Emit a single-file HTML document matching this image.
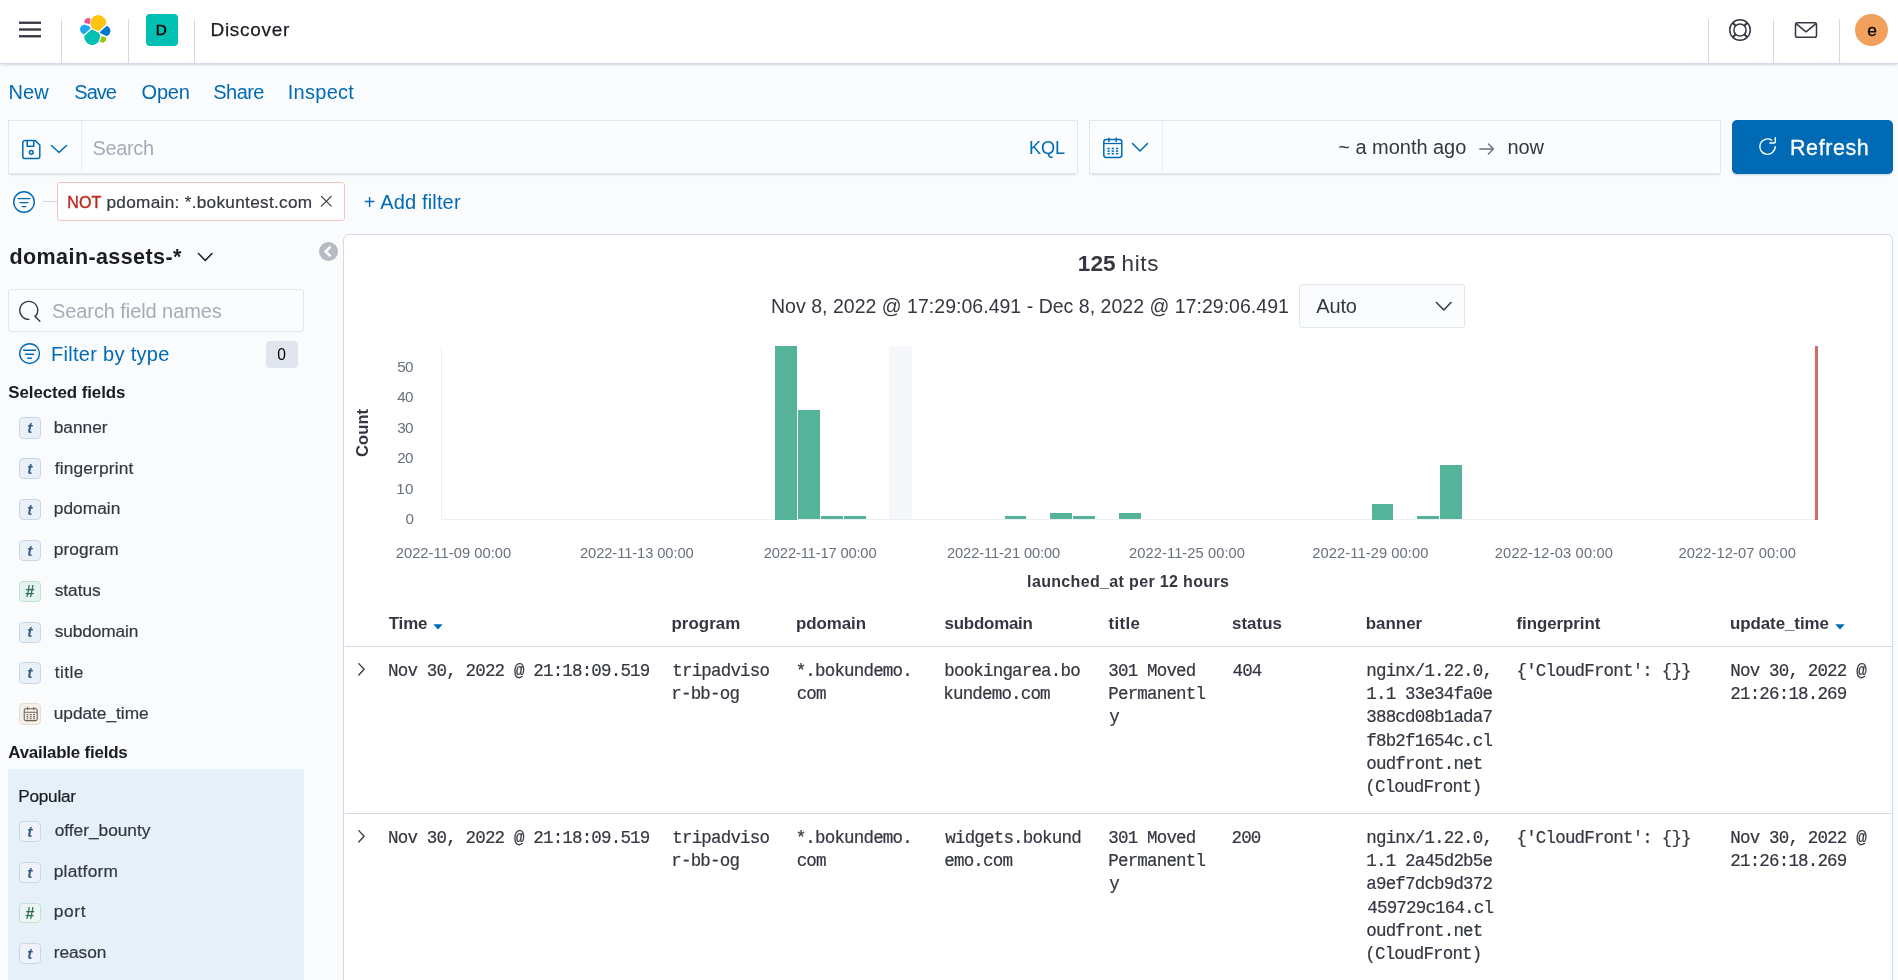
<!DOCTYPE html>
<html><head><meta charset="utf-8"><title>Discover - Elastic</title>
<style>
html,body{margin:0;padding:0;}
body{width:1898px;height:980px;overflow:hidden;background:#fafbfd;position:relative;font-family:"Liberation Sans",sans-serif;}
#app{position:absolute;left:0;top:0;width:1898px;height:980px;overflow:hidden;will-change:transform;}
.b{position:absolute;display:block;}
.t{position:absolute;white-space:pre;margin:0;padding:0;}
.sans{font-family:"Liberation Sans",sans-serif;}
.mono{font-family:"Liberation Mono",monospace;}
.serif{font-family:"Liberation Serif",serif;}
</style></head><body>
<div id="app">
<div class="b" style="left:0px;top:0px;width:1898px;height:63px;background:#fff;border-bottom:1px solid #d3dae6;box-shadow:0 2px 2px -1px rgba(152,162,179,.3),0 1px 5px -2px rgba(152,162,179,.3);"></div>
<div class="b" style="left:60.85px;top:19px;width:1.3px;height:44px;background:#d3dae6;"></div>
<div class="b" style="left:127.85px;top:19px;width:1.3px;height:44px;background:#d3dae6;"></div>
<div class="b" style="left:193.85px;top:19px;width:1.3px;height:44px;background:#d3dae6;"></div>
<div class="b" style="left:1707.85px;top:19px;width:1.3px;height:44px;background:#d3dae6;"></div>
<div class="b" style="left:1772.85px;top:19px;width:1.3px;height:44px;background:#d3dae6;"></div>
<div class="b" style="left:1838.85px;top:19px;width:1.3px;height:44px;background:#d3dae6;"></div>
<svg class="b" style="left:18px;top:20px;" width="24" height="20" viewBox="0 0 24 20"><rect x="1" y="1.6" width="22" height="2.3" fill="#343741"/><rect x="1" y="8.35" width="22" height="2.3" fill="#343741"/><rect x="1" y="15.1" width="22" height="2.3" fill="#343741"/></svg>
<svg class="b" style="left:78px;top:12px;" width="36" height="36" viewBox="0 0 36 36"><polygon points="20.28,3.76 24.14,5.12 26.94,8.05 27.67,11.27 22.33,16.72 20.52,18.21 14.52,15.64 13.20,12.17 13.92,7.62 16.42,4.66" fill="#fec514" stroke="#fec514" stroke-width="1.6" stroke-linejoin="round"/><polygon points="9.51,6.82 11.54,7.06 11.11,11.26 9.32,10.81 7.04,10.03 7.31,8.34" fill="#f04e98" stroke="#f04e98" stroke-width="1.6" stroke-linejoin="round"/><polygon points="6.49,13.46 10.64,14.76 11.59,16.28 5.63,21.53 3.52,19.69 2.76,16.92 3.83,14.47" fill="#1ba9f5" stroke="#1ba9f5" stroke-width="1.6" stroke-linejoin="round"/><polygon points="28.87,14.73 30.98,16.55 31.75,19.11 30.68,21.78 28.64,23.31 22.90,20.63 22.91,20.19" fill="#0077cc" stroke="#0077cc" stroke-width="1.6" stroke-linejoin="round"/><polygon points="13.76,18.30 19.99,21.13 21.60,23.67 19.85,29.36 17.13,31.56 14.01,32.49 9.95,30.72 7.35,27.12 7.07,24.36" fill="#00bfb3" stroke="#00bfb3" stroke-width="1.6" stroke-linejoin="round"/><polygon points="24.01,25.10 27.79,26.34 26.95,28.43 25.23,29.94 22.83,29.12" fill="#93c90e" stroke="#93c90e" stroke-width="1.6" stroke-linejoin="round"/></svg>
<div class="b" style="left:146px;top:14px;width:32px;height:32px;background:#00bfb3;border-radius:4px;"></div>
<div class="t sans" style="left:155.70px;top:20.10px;font-size:15.3px;line-height:20px;font-weight:400;color:#000;letter-spacing:0.000px;-webkit-text-stroke:0.5px #000;">D</div>
<div class="t sans" style="left:210.50px;top:17.40px;font-size:19px;line-height:25px;font-weight:400;color:#1a1c21;letter-spacing:0.703px;-webkit-text-stroke:0.25px #1a1c21;">Discover</div>
<svg class="b" style="left:1728px;top:18px;" width="24" height="24" viewBox="0 0 24 24"><g fill="none" stroke="#343741" stroke-width="1.5"><circle cx="12" cy="12" r="10.3"/><circle cx="12" cy="12" r="6.1"/><path d="M4.7 4.7l3 3M19.3 4.7l-3 3M4.7 19.3l3-3M19.3 19.3l-3-3" stroke-width="2"/></g></svg>
<svg class="b" style="left:1793px;top:20px;" width="26" height="20" viewBox="0 0 26 20"><g fill="none" stroke="#343741" stroke-width="1.5" stroke-linejoin="round"><rect x="2.5" y="2.7" width="21" height="14.6" rx="1.8"/><path d="M3 3.6l10 8.2 10-8.2"/></g></svg>
<div class="b" style="left:1855px;top:14px;width:32.6px;height:32px;background:#f1a15c;border-radius:50%;"></div>
<div class="t sans" style="left:1867.20px;top:18.60px;font-size:17.4px;line-height:23px;font-weight:400;color:#000;letter-spacing:0.000px;-webkit-text-stroke:0.3px #000;">e</div>
<div class="t sans" style="left:8.50px;top:79.30px;font-size:20px;line-height:26px;font-weight:400;color:#006bb4;letter-spacing:0.117px;">New</div>
<div class="t sans" style="left:74.30px;top:79.30px;font-size:20px;line-height:26px;font-weight:400;color:#006bb4;letter-spacing:-0.988px;">Save</div>
<div class="t sans" style="left:141.50px;top:79.30px;font-size:20px;line-height:26px;font-weight:400;color:#006bb4;letter-spacing:-0.168px;">Open</div>
<div class="t sans" style="left:213.30px;top:79.30px;font-size:20px;line-height:26px;font-weight:400;color:#006bb4;letter-spacing:-0.562px;">Share</div>
<div class="t sans" style="left:287.80px;top:79.30px;font-size:20px;line-height:26px;font-weight:400;color:#006bb4;letter-spacing:0.262px;">Inspect</div>
<div class="b" style="left:8px;top:120px;width:1070px;height:53.5px;background:#fbfcfd;border:1px solid #e2e6ef;box-shadow:0 1px 1px -1px rgba(152,162,179,.3),0 3px 2px -2px rgba(152,162,179,.3);box-sizing:border-box;"></div>
<div class="b" style="left:81px;top:121px;width:1px;height:51px;background:#e9ecf3;"></div>
<svg class="b" style="left:21px;top:138.5px;" width="22" height="21" viewBox="0 0 22 21"><g fill="none" stroke="#006bb4" stroke-width="1.5" stroke-linejoin="round"><path d="M1.8 3.6a2 2 0 012-2h10.4l4.6 4.4v11.4a2 2 0 01-2 2H3.8a2 2 0 01-2-2z"/><path d="M6.2 1.8v5.4h6.6V1.8"/><circle cx="10.3" cy="13.3" r="1.9"/></g></svg>
<svg class="b" style="left:50px;top:144px;" width="18" height="10" viewBox="0 0 18 10"><path d="M1.5 1.5L9 8.5L16.5 1.5" fill="none" stroke="#006bb4" stroke-width="1.5" stroke-linecap="round" stroke-linejoin="round"/></svg>
<div class="t sans" style="left:92.50px;top:135.00px;font-size:20px;line-height:26px;font-weight:400;color:#a5acb8;letter-spacing:-0.349px;">Search</div>
<div class="t sans" style="left:1029.00px;top:135.80px;font-size:18.2px;line-height:24px;font-weight:400;color:#006bb4;letter-spacing:-0.139px;">KQL</div>
<div class="b" style="left:1089px;top:120px;width:632px;height:53.5px;background:#fbfcfd;border:1px solid #e2e6ef;box-shadow:0 1px 1px -1px rgba(152,162,179,.3),0 3px 2px -2px rgba(152,162,179,.3);box-sizing:border-box;"></div>
<div class="b" style="left:1162px;top:121px;width:1px;height:51px;background:#e9ecf3;"></div>
<svg class="b" style="left:1102px;top:137px;" width="22" height="23" viewBox="0 0 22 23"><g fill="none" stroke="#006bb4" stroke-width="1.5"><rect x="1.8" y="2.5" width="18" height="18" rx="2.4"/><path d="M1.8 6.5h18" stroke-width="1.3"/><path d="M6.9 1.3v3.2M14.2 1.3v3.2" stroke-linecap="round"/></g><g fill="#006bb4"><rect x="5.45" y="10.75" width="2.3" height="1.5"/><rect x="9.65" y="10.75" width="2.3" height="1.5"/><rect x="13.85" y="10.75" width="2.3" height="1.5"/><rect x="5.45" y="13.35" width="2.3" height="1.5"/><rect x="9.65" y="13.35" width="2.3" height="1.5"/><rect x="13.85" y="13.35" width="2.3" height="1.5"/><rect x="5.45" y="15.95" width="2.3" height="1.5"/><rect x="9.65" y="15.95" width="2.3" height="1.5"/><rect x="13.85" y="15.95" width="2.3" height="1.5"/></g></svg>
<svg class="b" style="left:1131px;top:142px;" width="18" height="10.5" viewBox="0 0 18 10.5"><path d="M1.5 1.5L9 9L16.5 1.5" fill="none" stroke="#006bb4" stroke-width="1.5" stroke-linecap="round" stroke-linejoin="round"/></svg>
<div class="t sans" style="left:1338.30px;top:133.80px;font-size:20px;line-height:26px;font-weight:400;color:#343741;letter-spacing:-0.034px;">~ a month ago</div>
<svg class="b" style="left:1478px;top:142px;" width="18" height="14" viewBox="0 0 18 14"><path d="M1.8 7h13.6M10.4 2l5 5-5 5" fill="none" stroke="#69707d" stroke-width="1.4" stroke-linecap="round" stroke-linejoin="round"/></svg>
<div class="t sans" style="left:1507.50px;top:133.80px;font-size:20px;line-height:26px;font-weight:400;color:#343741;letter-spacing:-0.123px;">now</div>
<div class="b" style="left:1732px;top:120px;width:161px;height:53.5px;background:#006bb4;border-radius:5px;box-shadow:0 2px 2px -1px rgba(54,97,126,.3);"></div>
<svg class="b" style="left:1758px;top:136px;" width="19" height="20" viewBox="0 0 19 20"><g fill="none" stroke="#fff" stroke-width="1.4" stroke-linecap="round" stroke-linejoin="round"><path d="M17.2 10.6a7.7 7.7 0 11-3.6-6.5"/><path d="M17.3 1.6v4.4a1 1 0 01-1 1h-4.4"/></g></svg>
<div class="t sans" style="left:1790.00px;top:134.00px;font-size:21.5px;line-height:28px;font-weight:400;color:#fff;letter-spacing:0.579px;-webkit-text-stroke:0.3px #fff;">Refresh</div>
<svg class="b" style="left:12px;top:190px;" width="24" height="24" viewBox="0 0 24 24"><g fill="none" stroke="#006bb4" stroke-width="1.4" stroke-linecap="round"><circle cx="12" cy="12" r="10.3"/><path d="M6 8.6h12 M8 12.6h8 M10.2 16.6h3.6"/></g></svg>
<div class="b" style="left:43px;top:201px;width:14px;height:1px;background:#d3dae6;"></div>
<div class="b" style="left:57px;top:182px;width:288px;height:39px;background:#fff;border:1px solid #f0c4c0;border-radius:3px;box-sizing:border-box;"></div>
<div class="t sans" style="left:67.30px;top:192.10px;font-size:16px;line-height:21px;font-weight:400;color:#bd271e;letter-spacing:0.150px;-webkit-text-stroke:0.4px #bd271e;">NOT</div>
<div class="t sans" style="left:106.50px;top:191.10px;font-size:17.2px;line-height:22px;font-weight:400;color:#343741;letter-spacing:0.300px;-webkit-text-stroke:0.2px #343741;">pdomain: *.bokuntest.com</div>
<svg class="b" style="left:320px;top:194.8px;" width="13" height="13" viewBox="0 0 13 13"><path d="M1.4 1.4l9.8 9.8M11.2 1.4l-9.8 9.8" stroke="#343741" stroke-width="1.15" stroke-linecap="round"/></svg>
<div class="t sans" style="left:363.80px;top:188.60px;font-size:20px;line-height:26px;font-weight:400;color:#006bb4;letter-spacing:0.154px;">+ Add filter</div>
<div class="t sans" style="left:9.50px;top:242.80px;font-size:21.5px;line-height:28px;font-weight:700;color:#1a1c21;letter-spacing:0.413px;">domain-assets-*</div>
<svg class="b" style="left:197px;top:251.5px;" width="16.5" height="10" viewBox="0 0 16.5 10"><path d="M1.5 1.5L8.25 8.5L15 1.5" fill="none" stroke="#1a1c21" stroke-width="1.5" stroke-linecap="round" stroke-linejoin="round"/></svg>
<svg class="b" style="left:319px;top:242px;" width="19" height="19" viewBox="0 0 19 19"><circle cx="9.5" cy="9.5" r="9.4" fill="#b7bac0"/><path d="M11.6 4.6L6.6 9.5l5 4.9" fill="none" stroke="#fafbfd" stroke-width="2.6"/></svg>
<div class="b" style="left:8px;top:289px;width:296px;height:43px;background:#fbfcfd;border:1px solid #e1e5ee;box-sizing:border-box;border-radius:3px;"></div>
<svg class="b" style="left:18px;top:299.5px;" width="24" height="24" viewBox="0 0 24 24"><g fill="none" stroke="#343741" stroke-width="1.4" stroke-linecap="round"><path d="M10.9 19.4a9 9 0 116.4-2.8"/><path d="M16.9 16.2l5 5.1"/></g></svg>
<div class="t sans" style="left:52.00px;top:298.00px;font-size:20px;line-height:26px;font-weight:400;color:#a5acb8;letter-spacing:-0.082px;">Search field names</div>
<svg class="b" style="left:18.3px;top:342.3px;" width="23.2" height="23.2" viewBox="0 0 23.2 23.2"><g fill="none" stroke="#006bb4" stroke-width="1.4" stroke-linecap="round"><circle cx="11.6" cy="11.6" r="9.9"/><path d="M5.6 8.2h12 M7.6 12.2h8 M9.8 16.2h3.6"/></g></svg>
<div class="t sans" style="left:51.00px;top:340.80px;font-size:20px;line-height:26px;font-weight:400;color:#006bb4;letter-spacing:0.303px;">Filter by type</div>
<div class="b" style="left:265.5px;top:341px;width:32.5px;height:26.5px;background:#e0e5ee;border-radius:4px;"></div>
<div class="t sans" style="left:277.20px;top:344.50px;font-size:15.6px;line-height:20px;font-weight:500;color:#000;letter-spacing:0.000px;">0</div>
<div class="t sans" style="left:8.30px;top:381.70px;font-size:16.9px;line-height:22px;font-weight:700;color:#1a1c21;letter-spacing:-0.085px;">Selected fields</div>
<div class="b" style="left:19.25px;top:417.25px;width:21.5px;height:21.3px;background:#e9f0f7;border:1px solid #c9d8e7;border-radius:4px;box-sizing:border-box;"></div><div class="t sans" style="left:27.20px;top:418.05px;font-size:15.5px;line-height:20px;font-weight:700;font-style:italic;color:#3a5d80;letter-spacing:0.000px;">t</div>
<div class="t sans" style="left:53.75px;top:415.65px;font-size:17.3px;line-height:22px;font-weight:400;color:#343741;letter-spacing:-0.011px;-webkit-text-stroke:0.2px #343741;">banner</div>
<div class="b" style="left:19.25px;top:458.11px;width:21.5px;height:21.3px;background:#e9f0f7;border:1px solid #c9d8e7;border-radius:4px;box-sizing:border-box;"></div><div class="t sans" style="left:27.20px;top:458.91px;font-size:15.5px;line-height:20px;font-weight:700;font-style:italic;color:#3a5d80;letter-spacing:0.000px;">t</div>
<div class="t sans" style="left:54.75px;top:456.51px;font-size:17.3px;line-height:22px;font-weight:400;color:#343741;letter-spacing:0.171px;-webkit-text-stroke:0.2px #343741;">fingerprint</div>
<div class="b" style="left:19.25px;top:498.97px;width:21.5px;height:21.3px;background:#e9f0f7;border:1px solid #c9d8e7;border-radius:4px;box-sizing:border-box;"></div><div class="t sans" style="left:27.20px;top:499.77px;font-size:15.5px;line-height:20px;font-weight:700;font-style:italic;color:#3a5d80;letter-spacing:0.000px;">t</div>
<div class="t sans" style="left:53.75px;top:497.37px;font-size:17.3px;line-height:22px;font-weight:400;color:#343741;letter-spacing:0.054px;-webkit-text-stroke:0.2px #343741;">pdomain</div>
<div class="b" style="left:19.25px;top:539.83px;width:21.5px;height:21.3px;background:#e9f0f7;border:1px solid #c9d8e7;border-radius:4px;box-sizing:border-box;"></div><div class="t sans" style="left:27.20px;top:540.63px;font-size:15.5px;line-height:20px;font-weight:700;font-style:italic;color:#3a5d80;letter-spacing:0.000px;">t</div>
<div class="t sans" style="left:53.75px;top:538.23px;font-size:17.3px;line-height:22px;font-weight:400;color:#343741;letter-spacing:0.091px;-webkit-text-stroke:0.2px #343741;">program</div>
<div class="b" style="left:19.25px;top:580.69px;width:21.5px;height:21.3px;background:#e4f3ed;border:1px solid #bfe2d3;border-radius:4px;box-sizing:border-box;"></div><div class="t sans" style="left:25.20px;top:581.09px;font-size:16px;line-height:21px;font-weight:700;font-style:italic;color:#2d6e58;letter-spacing:0.000px;">#</div>
<div class="t sans" style="left:54.75px;top:579.09px;font-size:17.3px;line-height:22px;font-weight:400;color:#343741;letter-spacing:-0.043px;-webkit-text-stroke:0.2px #343741;">status</div>
<div class="b" style="left:19.25px;top:621.55px;width:21.5px;height:21.3px;background:#e9f0f7;border:1px solid #c9d8e7;border-radius:4px;box-sizing:border-box;"></div><div class="t sans" style="left:27.20px;top:622.35px;font-size:15.5px;line-height:20px;font-weight:700;font-style:italic;color:#3a5d80;letter-spacing:0.000px;">t</div>
<div class="t sans" style="left:54.75px;top:619.95px;font-size:17.3px;line-height:22px;font-weight:400;color:#343741;letter-spacing:-0.116px;-webkit-text-stroke:0.2px #343741;">subdomain</div>
<div class="b" style="left:19.25px;top:662.41px;width:21.5px;height:21.3px;background:#e9f0f7;border:1px solid #c9d8e7;border-radius:4px;box-sizing:border-box;"></div><div class="t sans" style="left:27.20px;top:663.21px;font-size:15.5px;line-height:20px;font-weight:700;font-style:italic;color:#3a5d80;letter-spacing:0.000px;">t</div>
<div class="t sans" style="left:54.75px;top:660.81px;font-size:17.3px;line-height:22px;font-weight:400;color:#343741;letter-spacing:0.430px;-webkit-text-stroke:0.2px #343741;">title</div>
<div class="b" style="left:19.25px;top:703.27px;width:21.5px;height:21.3px;background:#f5f1ea;border:1px solid #e6dece;border-radius:4px;box-sizing:border-box;"></div><svg class="b" style="left:22.5px;top:705.87px;" width="15.5" height="16" viewBox="0 0 15.5 16"><g fill="none" stroke="#6a6050" stroke-width="1.05"><rect x="1.2" y="2.8" width="13" height="11.8" rx="1.6"/><path d="M1.2 6.2h13M4.6 1v3M10.8 1v3"/></g><g fill="#6a6050"><rect x="3.6" y="8" width="1.7" height="1.3"/><rect x="6.9" y="8" width="1.7" height="1.3"/><rect x="10.2" y="8" width="1.7" height="1.3"/><rect x="3.6" y="10.2" width="1.7" height="1.3"/><rect x="6.9" y="10.2" width="1.7" height="1.3"/><rect x="10.2" y="10.2" width="1.7" height="1.3"/><rect x="3.6" y="12.3" width="1.7" height="1.0"/><rect x="6.9" y="12.3" width="1.7" height="1.0"/><rect x="10.2" y="12.3" width="1.7" height="1.0"/></g></svg>
<div class="t sans" style="left:53.75px;top:701.67px;font-size:17.3px;line-height:22px;font-weight:400;color:#343741;letter-spacing:-0.025px;-webkit-text-stroke:0.2px #343741;">update_time</div>
<div class="t sans" style="left:8.30px;top:741.80px;font-size:16.9px;line-height:22px;font-weight:700;color:#1a1c21;letter-spacing:-0.197px;">Available fields</div>
<div class="b" style="left:8px;top:769px;width:296px;height:211px;background:#e6f0f8;"></div>
<div class="t sans" style="left:18.30px;top:785.20px;font-size:17.2px;line-height:22px;font-weight:400;color:#1a1c21;letter-spacing:-0.253px;-webkit-text-stroke:0.2px #1a1c21;">Popular</div>
<div class="b" style="left:19.25px;top:821.25px;width:21.5px;height:20.6px;background:#edf3f9;border:1px solid #c9d8e7;border-radius:4px;box-sizing:border-box;"></div><div class="t sans" style="left:27.20px;top:821.65px;font-size:15.5px;line-height:20px;font-weight:700;font-style:italic;color:#3a5d80;letter-spacing:0.000px;">t</div>
<div class="t sans" style="left:54.75px;top:818.65px;font-size:17.3px;line-height:22px;font-weight:400;color:#343741;letter-spacing:-0.011px;-webkit-text-stroke:0.2px #343741;">offer_bounty</div>
<div class="b" style="left:19.25px;top:862.3px;width:21.5px;height:20.6px;background:#edf3f9;border:1px solid #c9d8e7;border-radius:4px;box-sizing:border-box;"></div><div class="t sans" style="left:27.20px;top:862.70px;font-size:15.5px;line-height:20px;font-weight:700;font-style:italic;color:#3a5d80;letter-spacing:0.000px;">t</div>
<div class="t sans" style="left:53.75px;top:859.70px;font-size:17.3px;line-height:22px;font-weight:400;color:#343741;letter-spacing:0.246px;-webkit-text-stroke:0.2px #343741;">platform</div>
<div class="b" style="left:19.25px;top:902.6px;width:21.5px;height:20.6px;background:#edf6f3;border:1px solid #bfe2d3;border-radius:4px;box-sizing:border-box;"></div><div class="t sans" style="left:25.20px;top:902.60px;font-size:16px;line-height:21px;font-weight:700;font-style:italic;color:#2d6e58;letter-spacing:0.000px;">#</div>
<div class="t sans" style="left:53.75px;top:900.00px;font-size:17.3px;line-height:22px;font-weight:400;color:#343741;letter-spacing:0.674px;-webkit-text-stroke:0.2px #343741;">port</div>
<div class="b" style="left:19.25px;top:943.3px;width:21.5px;height:20.6px;background:#edf3f9;border:1px solid #c9d8e7;border-radius:4px;box-sizing:border-box;"></div><div class="t sans" style="left:27.20px;top:943.70px;font-size:15.5px;line-height:20px;font-weight:700;font-style:italic;color:#3a5d80;letter-spacing:0.000px;">t</div>
<div class="t sans" style="left:53.75px;top:940.70px;font-size:17.3px;line-height:22px;font-weight:400;color:#343741;letter-spacing:-0.046px;-webkit-text-stroke:0.2px #343741;">reason</div>
<div class="b" style="left:343px;top:234px;width:1550px;height:760px;background:#fff;border:1px solid #d3dae6;border-radius:6px;box-sizing:border-box;box-shadow:0 2px 2px -1px rgba(152,162,179,.2);"></div>
<div class="t sans" style="left:1077.80px;top:249.20px;font-size:22.6px;line-height:29px;font-weight:700;color:#343741;letter-spacing:0.034px;">125</div>
<div class="t sans" style="left:1121.50px;top:249.20px;font-size:22.4px;line-height:29px;font-weight:400;color:#343741;letter-spacing:0.717px;">hits</div>
<div class="t sans" style="left:771.00px;top:293.80px;font-size:19.5px;line-height:25px;font-weight:400;color:#343741;letter-spacing:0.023px;">Nov 8, 2022 @ 17:29:06.491 - Dec 8, 2022 @ 17:29:06.491</div>
<div class="b" style="left:1299px;top:284px;width:166px;height:43.5px;background:#fbfcfd;border:1px solid #e1e5ee;box-sizing:border-box;border-radius:3px;"></div>
<div class="t sans" style="left:1316.30px;top:293.30px;font-size:20px;line-height:26px;font-weight:400;color:#343741;letter-spacing:-0.173px;">Auto</div>
<svg class="b" style="left:1434.5px;top:300.5px;" width="17.5" height="10.5" viewBox="0 0 17.5 10.5"><path d="M1.5 1.5L8.75 9L16 1.5" fill="none" stroke="#343741" stroke-width="1.5" stroke-linecap="round" stroke-linejoin="round"/></svg>
<div class="b" style="left:441px;top:346px;width:1px;height:174px;background:#eef0f4;"></div>
<div class="b" style="left:441px;top:519px;width:1377px;height:1px;background:#eceef2;"></div>
<div class="b" style="left:889.3px;top:346px;width:22.7px;height:173px;background:#f5f7fa;"></div>
<div class="b" style="left:775.32px;top:346px;width:21.5px;height:173.5px;background:#54b399;"></div>
<div class="b" style="left:798.25px;top:409.7px;width:21.5px;height:109.8px;background:#54b399;"></div>
<div class="b" style="left:821.18px;top:516.45px;width:21.5px;height:3.05px;background:#54b399;"></div>
<div class="b" style="left:844.11px;top:516.45px;width:21.5px;height:3.05px;background:#54b399;"></div>
<div class="b" style="left:1004.62px;top:516.45px;width:21.5px;height:3.05px;background:#54b399;"></div>
<div class="b" style="left:1050.48px;top:513.4px;width:21.5px;height:6.1px;background:#54b399;"></div>
<div class="b" style="left:1073.41px;top:516.45px;width:21.5px;height:3.05px;background:#54b399;"></div>
<div class="b" style="left:1119.27px;top:513.4px;width:21.5px;height:6.1px;background:#54b399;"></div>
<div class="b" style="left:1371.5px;top:504.25px;width:21.5px;height:15.25px;background:#54b399;"></div>
<div class="b" style="left:1417.36px;top:516.45px;width:21.5px;height:3.05px;background:#54b399;"></div>
<div class="b" style="left:1440.29px;top:464.6px;width:21.5px;height:54.9px;background:#54b399;"></div>
<div class="b" style="left:1815.2px;top:346px;width:2.6px;height:173.5px;background:#d36b64;"></div>
<div class="t sans" style="left:405.60px;top:509.00px;font-size:15.2px;line-height:20px;font-weight:400;color:#69707d;letter-spacing:0.000px;">0</div>
<div class="t sans" style="left:396.30px;top:478.50px;font-size:15.2px;line-height:20px;font-weight:400;color:#69707d;letter-spacing:0.253px;">10</div>
<div class="t sans" style="left:397.30px;top:448.00px;font-size:15.2px;line-height:20px;font-weight:400;color:#69707d;letter-spacing:-0.747px;">20</div>
<div class="t sans" style="left:397.30px;top:417.50px;font-size:15.2px;line-height:20px;font-weight:400;color:#69707d;letter-spacing:-0.747px;">30</div>
<div class="t sans" style="left:397.30px;top:387.00px;font-size:15.2px;line-height:20px;font-weight:400;color:#69707d;letter-spacing:-0.747px;">40</div>
<div class="t sans" style="left:397.30px;top:356.50px;font-size:15.2px;line-height:20px;font-weight:400;color:#69707d;letter-spacing:-0.747px;">50</div>
<div class="b" style="left:356px;top:457px;width:0;height:0;transform:rotate(-90deg);transform-origin:0 0;"><div class="t sans" style="left:0.00px;top:-4.10px;font-size:16.6px;line-height:22px;font-weight:700;color:#343741;letter-spacing:0.052px;">Count</div></div>
<div class="t sans" style="left:395.75px;top:543.80px;font-size:14.7px;line-height:19px;font-weight:400;color:#69707d;letter-spacing:0.036px;">2022-11-09 00:00</div>
<div class="t sans" style="left:580.00px;top:543.80px;font-size:14.7px;line-height:19px;font-weight:400;color:#69707d;letter-spacing:-0.080px;">2022-11-13 00:00</div>
<div class="t sans" style="left:763.80px;top:543.80px;font-size:14.7px;line-height:19px;font-weight:400;color:#69707d;letter-spacing:-0.140px;">2022-11-17 00:00</div>
<div class="t sans" style="left:947.00px;top:543.80px;font-size:14.7px;line-height:19px;font-weight:400;color:#69707d;letter-spacing:-0.107px;">2022-11-21 00:00</div>
<div class="t sans" style="left:1129.10px;top:543.80px;font-size:14.7px;line-height:19px;font-weight:400;color:#69707d;letter-spacing:0.066px;">2022-11-25 00:00</div>
<div class="t sans" style="left:1312.30px;top:543.80px;font-size:14.7px;line-height:19px;font-weight:400;color:#69707d;letter-spacing:0.086px;">2022-11-29 00:00</div>
<div class="t sans" style="left:1494.75px;top:543.80px;font-size:14.7px;line-height:19px;font-weight:400;color:#69707d;letter-spacing:0.147px;">2022-12-03 00:00</div>
<div class="t sans" style="left:1678.50px;top:543.80px;font-size:14.7px;line-height:19px;font-weight:400;color:#69707d;letter-spacing:0.097px;">2022-12-07 00:00</div>
<div class="t sans" style="left:1027.10px;top:571.30px;font-size:16px;line-height:21px;font-weight:700;color:#343741;letter-spacing:0.346px;">launched_at per 12 hours</div>
<div class="b" style="left:344.5px;top:646px;width:1547px;height:1px;background:#d3dae6;"></div>
<div class="b" style="left:344.5px;top:813px;width:1547px;height:1px;background:#d3dae6;"></div>
<div class="t sans" style="left:388.75px;top:612.90px;font-size:16.9px;line-height:22px;font-weight:700;color:#343741;letter-spacing:-0.158px;">Time</div>
<div class="t sans" style="left:671.50px;top:612.90px;font-size:16.9px;line-height:22px;font-weight:700;color:#343741;letter-spacing:0.043px;">program</div>
<div class="t sans" style="left:796.00px;top:612.90px;font-size:16.9px;line-height:22px;font-weight:700;color:#343741;letter-spacing:-0.060px;">pdomain</div>
<div class="t sans" style="left:944.60px;top:612.90px;font-size:16.9px;line-height:22px;font-weight:700;color:#343741;letter-spacing:-0.221px;">subdomain</div>
<div class="t sans" style="left:1108.60px;top:612.90px;font-size:16.9px;line-height:22px;font-weight:700;color:#343741;letter-spacing:0.291px;">title</div>
<div class="t sans" style="left:1232.00px;top:612.90px;font-size:16.9px;line-height:22px;font-weight:700;color:#343741;letter-spacing:0.049px;">status</div>
<div class="t sans" style="left:1365.70px;top:612.90px;font-size:16.9px;line-height:22px;font-weight:700;color:#343741;letter-spacing:0.032px;">banner</div>
<div class="t sans" style="left:1516.50px;top:612.90px;font-size:16.9px;line-height:22px;font-weight:700;color:#343741;letter-spacing:-0.057px;">fingerprint</div>
<div class="t sans" style="left:1730.00px;top:612.90px;font-size:16.9px;line-height:22px;font-weight:700;color:#343741;letter-spacing:-0.059px;">update_time</div>
<svg class="b" style="left:433.2px;top:624px;" width="10" height="6" viewBox="0 0 10 6"><path d="M0.3 0.3h9.4L5 5.6z" fill="#006bb4"/></svg>
<svg class="b" style="left:1835px;top:624px;" width="10" height="6" viewBox="0 0 10 6"><path d="M0.3 0.3h9.4L5 5.6z" fill="#006bb4"/></svg>
<svg class="b" style="left:357px;top:662.2px;" width="10" height="15" viewBox="0 0 10 15"><path d="M1.8 1.6l5.3 5.7-5.3 5.7" fill="none" stroke="#343741" stroke-width="1.3" stroke-linecap="round" stroke-linejoin="round"/></svg>
<div class="t mono" style="left:388.10px;top:659.50px;font-size:17.5px;line-height:23px;font-weight:400;color:#343741;letter-spacing:-0.822px;-webkit-text-stroke:0.2px #343741;">Nov 30, 2022 @ 21:18:09.519</div>
<div class="t mono" style="left:672.30px;top:659.50px;font-size:17.5px;line-height:23px;font-weight:400;color:#343741;letter-spacing:-0.822px;-webkit-text-stroke:0.2px #343741;">tripadviso</div><div class="t mono" style="left:671.30px;top:682.85px;font-size:17.5px;line-height:23px;font-weight:400;color:#343741;letter-spacing:-0.822px;-webkit-text-stroke:0.2px #343741;">r-bb-og</div>
<div class="t mono" style="left:795.70px;top:659.50px;font-size:17.5px;line-height:23px;font-weight:400;color:#343741;letter-spacing:-0.822px;-webkit-text-stroke:0.2px #343741;">*.bokundemo.</div><div class="t mono" style="left:796.70px;top:682.85px;font-size:17.5px;line-height:23px;font-weight:400;color:#343741;letter-spacing:-0.822px;-webkit-text-stroke:0.2px #343741;">com</div>
<div class="t mono" style="left:944.30px;top:659.50px;font-size:17.5px;line-height:23px;font-weight:400;color:#343741;letter-spacing:-0.822px;-webkit-text-stroke:0.2px #343741;">bookingarea.bo</div><div class="t mono" style="left:943.30px;top:682.85px;font-size:17.5px;line-height:23px;font-weight:400;color:#343741;letter-spacing:-0.822px;-webkit-text-stroke:0.2px #343741;">kundemo.com</div>
<div class="t mono" style="left:1108.30px;top:659.50px;font-size:17.5px;line-height:23px;font-weight:400;color:#343741;letter-spacing:-0.822px;-webkit-text-stroke:0.2px #343741;">301 Moved</div><div class="t mono" style="left:1108.30px;top:682.85px;font-size:17.5px;line-height:23px;font-weight:400;color:#343741;letter-spacing:-0.822px;-webkit-text-stroke:0.2px #343741;">Permanentl</div><div class="t mono" style="left:1109.30px;top:706.20px;font-size:17.5px;line-height:23px;font-weight:400;color:#343741;letter-spacing:-0.822px;-webkit-text-stroke:0.2px #343741;">y</div>
<div class="t mono" style="left:1232.50px;top:659.50px;font-size:17.5px;line-height:23px;font-weight:400;color:#343741;letter-spacing:-0.822px;-webkit-text-stroke:0.2px #343741;">404</div>
<div class="t mono" style="left:1366.30px;top:659.50px;font-size:17.5px;line-height:23px;font-weight:400;color:#343741;letter-spacing:-0.822px;-webkit-text-stroke:0.2px #343741;">nginx/1.22.0,</div><div class="t mono" style="left:1366.30px;top:682.85px;font-size:17.5px;line-height:23px;font-weight:400;color:#343741;letter-spacing:-0.822px;-webkit-text-stroke:0.2px #343741;">1.1 33e34fa0e</div><div class="t mono" style="left:1366.30px;top:706.20px;font-size:17.5px;line-height:23px;font-weight:400;color:#343741;letter-spacing:-0.822px;-webkit-text-stroke:0.2px #343741;">388cd08b1ada7</div><div class="t mono" style="left:1366.30px;top:729.55px;font-size:17.5px;line-height:23px;font-weight:400;color:#343741;letter-spacing:-0.822px;-webkit-text-stroke:0.2px #343741;">f8b2f1654c.cl</div><div class="t mono" style="left:1366.30px;top:752.90px;font-size:17.5px;line-height:23px;font-weight:400;color:#343741;letter-spacing:-0.822px;-webkit-text-stroke:0.2px #343741;">oudfront.net</div><div class="t mono" style="left:1365.30px;top:776.25px;font-size:17.5px;line-height:23px;font-weight:400;color:#343741;letter-spacing:-0.822px;-webkit-text-stroke:0.2px #343741;">(CloudFront)</div>
<div class="t mono" style="left:1516.50px;top:659.50px;font-size:17.5px;line-height:23px;font-weight:400;color:#343741;letter-spacing:-0.822px;-webkit-text-stroke:0.2px #343741;">{&#x27;CloudFront&#x27;: {}}</div>
<div class="t mono" style="left:1730.30px;top:659.50px;font-size:17.5px;line-height:23px;font-weight:400;color:#343741;letter-spacing:-0.822px;-webkit-text-stroke:0.2px #343741;">Nov 30, 2022 @</div><div class="t mono" style="left:1730.30px;top:682.85px;font-size:17.5px;line-height:23px;font-weight:400;color:#343741;letter-spacing:-0.822px;-webkit-text-stroke:0.2px #343741;">21:26:18.269</div>
<svg class="b" style="left:357px;top:829.4px;" width="10" height="15" viewBox="0 0 10 15"><path d="M1.8 1.6l5.3 5.7-5.3 5.7" fill="none" stroke="#343741" stroke-width="1.3" stroke-linecap="round" stroke-linejoin="round"/></svg>
<div class="t mono" style="left:388.10px;top:826.70px;font-size:17.5px;line-height:23px;font-weight:400;color:#343741;letter-spacing:-0.822px;-webkit-text-stroke:0.2px #343741;">Nov 30, 2022 @ 21:18:09.519</div>
<div class="t mono" style="left:672.30px;top:826.70px;font-size:17.5px;line-height:23px;font-weight:400;color:#343741;letter-spacing:-0.822px;-webkit-text-stroke:0.2px #343741;">tripadviso</div><div class="t mono" style="left:671.30px;top:850.05px;font-size:17.5px;line-height:23px;font-weight:400;color:#343741;letter-spacing:-0.822px;-webkit-text-stroke:0.2px #343741;">r-bb-og</div>
<div class="t mono" style="left:795.70px;top:826.70px;font-size:17.5px;line-height:23px;font-weight:400;color:#343741;letter-spacing:-0.822px;-webkit-text-stroke:0.2px #343741;">*.bokundemo.</div><div class="t mono" style="left:796.70px;top:850.05px;font-size:17.5px;line-height:23px;font-weight:400;color:#343741;letter-spacing:-0.822px;-webkit-text-stroke:0.2px #343741;">com</div>
<div class="t mono" style="left:945.30px;top:826.70px;font-size:17.5px;line-height:23px;font-weight:400;color:#343741;letter-spacing:-0.822px;-webkit-text-stroke:0.2px #343741;">widgets.bokund</div><div class="t mono" style="left:944.30px;top:850.05px;font-size:17.5px;line-height:23px;font-weight:400;color:#343741;letter-spacing:-0.822px;-webkit-text-stroke:0.2px #343741;">emo.com</div>
<div class="t mono" style="left:1108.30px;top:826.70px;font-size:17.5px;line-height:23px;font-weight:400;color:#343741;letter-spacing:-0.822px;-webkit-text-stroke:0.2px #343741;">301 Moved</div><div class="t mono" style="left:1108.30px;top:850.05px;font-size:17.5px;line-height:23px;font-weight:400;color:#343741;letter-spacing:-0.822px;-webkit-text-stroke:0.2px #343741;">Permanentl</div><div class="t mono" style="left:1109.30px;top:873.40px;font-size:17.5px;line-height:23px;font-weight:400;color:#343741;letter-spacing:-0.822px;-webkit-text-stroke:0.2px #343741;">y</div>
<div class="t mono" style="left:1231.50px;top:826.70px;font-size:17.5px;line-height:23px;font-weight:400;color:#343741;letter-spacing:-0.822px;-webkit-text-stroke:0.2px #343741;">200</div>
<div class="t mono" style="left:1366.30px;top:826.70px;font-size:17.5px;line-height:23px;font-weight:400;color:#343741;letter-spacing:-0.822px;-webkit-text-stroke:0.2px #343741;">nginx/1.22.0,</div><div class="t mono" style="left:1366.30px;top:850.05px;font-size:17.5px;line-height:23px;font-weight:400;color:#343741;letter-spacing:-0.822px;-webkit-text-stroke:0.2px #343741;">1.1 2a45d2b5e</div><div class="t mono" style="left:1366.30px;top:873.40px;font-size:17.5px;line-height:23px;font-weight:400;color:#343741;letter-spacing:-0.822px;-webkit-text-stroke:0.2px #343741;">a9ef7dcb9d372</div><div class="t mono" style="left:1367.30px;top:896.75px;font-size:17.5px;line-height:23px;font-weight:400;color:#343741;letter-spacing:-0.822px;-webkit-text-stroke:0.2px #343741;">459729c164.cl</div><div class="t mono" style="left:1366.30px;top:920.10px;font-size:17.5px;line-height:23px;font-weight:400;color:#343741;letter-spacing:-0.822px;-webkit-text-stroke:0.2px #343741;">oudfront.net</div><div class="t mono" style="left:1365.30px;top:943.45px;font-size:17.5px;line-height:23px;font-weight:400;color:#343741;letter-spacing:-0.822px;-webkit-text-stroke:0.2px #343741;">(CloudFront)</div>
<div class="t mono" style="left:1516.50px;top:826.70px;font-size:17.5px;line-height:23px;font-weight:400;color:#343741;letter-spacing:-0.822px;-webkit-text-stroke:0.2px #343741;">{&#x27;CloudFront&#x27;: {}}</div>
<div class="t mono" style="left:1730.30px;top:826.70px;font-size:17.5px;line-height:23px;font-weight:400;color:#343741;letter-spacing:-0.822px;-webkit-text-stroke:0.2px #343741;">Nov 30, 2022 @</div><div class="t mono" style="left:1730.30px;top:850.05px;font-size:17.5px;line-height:23px;font-weight:400;color:#343741;letter-spacing:-0.822px;-webkit-text-stroke:0.2px #343741;">21:26:18.269</div>
</div>
</body></html>
